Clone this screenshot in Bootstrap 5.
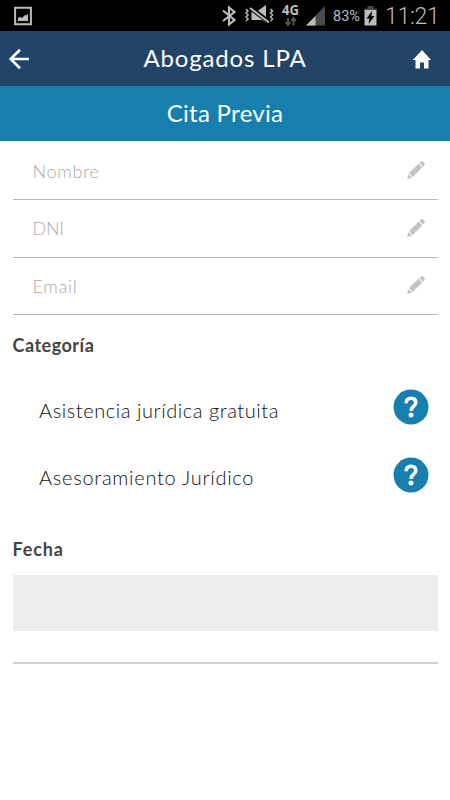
<!DOCTYPE html>
<html lang="es">
<head>
<meta charset="utf-8">
<meta name="viewport" content="width=device-width, initial-scale=1">
<title>Cita Previa</title>
<link href="https://cdn.jsdelivr.net/npm/bootstrap@5.3.0/dist/css/bootstrap.min.css" rel="stylesheet">
<style>
body{font-family:Lato,"Open Sans",sans-serif;background:#fff;min-height:800px}
svg{display:block;flex:none}
.status{height:31px;background:#000;color:#bcbcbc;font-family:Roboto,sans-serif;padding:0 12px 0 14px}
.battery-text{font-size:14.5px;line-height:31px;width:28px;margin-left:7px;padding-top:2px;white-space:nowrap}
.battery-icon{margin-left:3px}
.clock{font-size:23px;font-weight:300;line-height:31px;margin-left:8px;padding-top:2px;width:53px;letter-spacing:-.3px;white-space:nowrap}
.topbar{height:55px;background:#224467;color:#fff;padding:0 18px 0 8px}
.subbar{height:55px;background:#177fae;color:#fff}
.title{font-size:24px;line-height:54px;letter-spacing:.3px}
.topbar .title{letter-spacing:.85px;line-height:53px;padding:0 0 2px 8px}
.content{padding:0 12.5px}
.field{height:57.5px;border-bottom:1.5px solid #b8b8b8;padding:1px 12.5px 0 20px}
.field:first-child{height:59px;padding-top:2px}
.field svg{margin-bottom:2px}
.hint{font-size:18px;font-weight:300;color:#a9a9a9;letter-spacing:.7px}
.hint-caps{letter-spacing:-.3px}
.heading{font-size:18px;font-weight:700;line-height:24px;color:#444;letter-spacing:.5px}
.heading-cat{margin:18px 0 16.5px}
.heading-date{margin:28px 0 14px;letter-spacing:.85px}
.cat{height:67.5px;padding:0 9px 0 26.5px}
.cat-name{font-size:20px;font-weight:300;color:#111;padding-top:5px;letter-spacing:.56px}
.cat-wide{letter-spacing:.72px}
.datebox{height:56.5px;background:#ececec}
.endline{height:33px;border-bottom:2px solid #d0d0d0}
</style>
</head>
<body>
<svg class="d-none">
  <symbol id="pencil" viewBox="0 0 18 18"><path fill="#c3c3c3" d="M0 18l1.300-5 3.700 3.700zM2 12L11.500 2.800l3.700 3.700L5.700 16zM12.300 2L14 .5q1-.8 2 0L17.500 2q.8 1 0 2L16 5.700z"/></symbol>
  <symbol id="help" viewBox="0 0 36 36"><circle cx="18" cy="18" r="17.500" fill="#177fae"/><path d="M13.200 14.200Q13.200 9.200 18 9.200q4.800 0 4.800 4.300 0 2.300-2.400 4-2.200 1.600-2.200 4.500" fill="none" stroke="#fff" stroke-width="3.600"/><circle cx="18" cy="26" r="2.500" fill="#fff"/></symbol>
</svg>
<div class="status d-flex align-items-center">
  <svg width="18" height="20" viewBox="0 0 18 20"><path d="M1.100 1.700h15.800v16.600H1.100z" fill="none" stroke="#bcbcbc" stroke-width="2"/><path d="M4 15v-3l2-1 2 1 3-3 1 .5L14 8v7z" fill="#bcbcbc"/></svg>
  <div class="d-flex align-items-center ms-auto">
    <svg width="104" height="31" viewBox="0 0 104 31">
      <path d="M1 10.500l11.500 9.500-5.500 4.500v-17l5.500 4.500L1 21" fill="none" stroke="#bcbcbc" stroke-width="2.200"/>
      <path d="M24 9l2 2-2 2 2 2-2 2 2 2-2 2M48.500 9l2 2-2 2 2 2-2 2 2 2-2 2" fill="none" stroke="#bcbcbc" stroke-width="1.500"/>
      <path d="M29.500 11h6l8.500-6v17.500l-4-2.500h-10.500z" fill="#bcbcbc"/><path d="M28 7.500l19 14.500" stroke="#000" stroke-width="4.500"/><path d="M28 8l19 14.500" stroke="#bcbcbc" stroke-width="2"/>
      <text x="60" y="14.500" textLength="17" lengthAdjust="spacingAndGlyphs" font-family="Open Sans, sans-serif" font-size="14" font-weight="700" fill="#bcbcbc">4G</text>
      <path d="M66 18v7M63.500 22l2.500 3 2.500-3M71.500 25.500v-7M69 21l2.500-3 2.500 3" fill="none" stroke="#555" stroke-width="1.900"/>
      <path d="M84 25.500L103 6v19.500z" fill="#4a4a4a"/><path d="M84 25.500L93.500 16v9.500z" fill="#bcbcbc"/>
    </svg>
    <span class="battery-text">83%</span>
    <svg class="battery-icon" width="13" height="22" viewBox="0 0 13 22"><path d="M3.500 1h6v2.500h3v3H.5v-3h3z" fill="#4a4a4a"/><path d="M.5 5h12v15.500H.5z" fill="#bcbcbc"/><path d="M8 6L2.500 13.500h3l-1 5.500 6-8h-3z" fill="#000"/></svg>
    <span class="clock">11:21</span>
  </div>
</div>
<nav class="topbar d-flex align-items-center justify-content-between">
  <svg width="22" height="22" viewBox="0 0 22 22"><path d="M21 11H3M12 1.700L2.700 11l9.300 9.300" fill="none" stroke="#fff" stroke-width="2.700"/></svg>
  <span class="title">Abogados LPA</span>
  <svg width="20" height="20" viewBox="0 0 20 20"><path d="M10 1l9.200 10h-2.700v8.500h-4.500v-6H8v6H3.500V11H.8z" fill="#fff"/></svg>
</nav>
<div class="subbar title text-center">Cita Previa</div>
<main class="content">
  <section>
    <div class="field d-flex align-items-center justify-content-between"><span class="hint">Nombre</span><svg width="18" height="18"><use href="#pencil"/></svg></div>
    <div class="field d-flex align-items-center justify-content-between"><span class="hint hint-caps">DNI</span><svg width="18" height="18"><use href="#pencil"/></svg></div>
    <div class="field d-flex align-items-center justify-content-between"><span class="hint">Email</span><svg width="18" height="18"><use href="#pencil"/></svg></div>
  </section>
  <h2 class="heading heading-cat">Categoría</h2>
  <section>
    <div class="cat d-flex align-items-center justify-content-between"><span class="cat-name">Asistencia jurídica gratuita</span><svg width="36" height="36"><use href="#help"/></svg></div>
    <div class="cat d-flex align-items-center justify-content-between"><span class="cat-name cat-wide">Asesoramiento Jurídico</span><svg width="36" height="36"><use href="#help"/></svg></div>
  </section>
  <h2 class="heading heading-date">Fecha</h2>
  <div class="datebox"></div>
  <div class="endline"></div>
</main>
<script src="https://cdn.jsdelivr.net/npm/bootstrap@5.3.0/dist/js/bootstrap.bundle.min.js"></script>
</body>
</html>
